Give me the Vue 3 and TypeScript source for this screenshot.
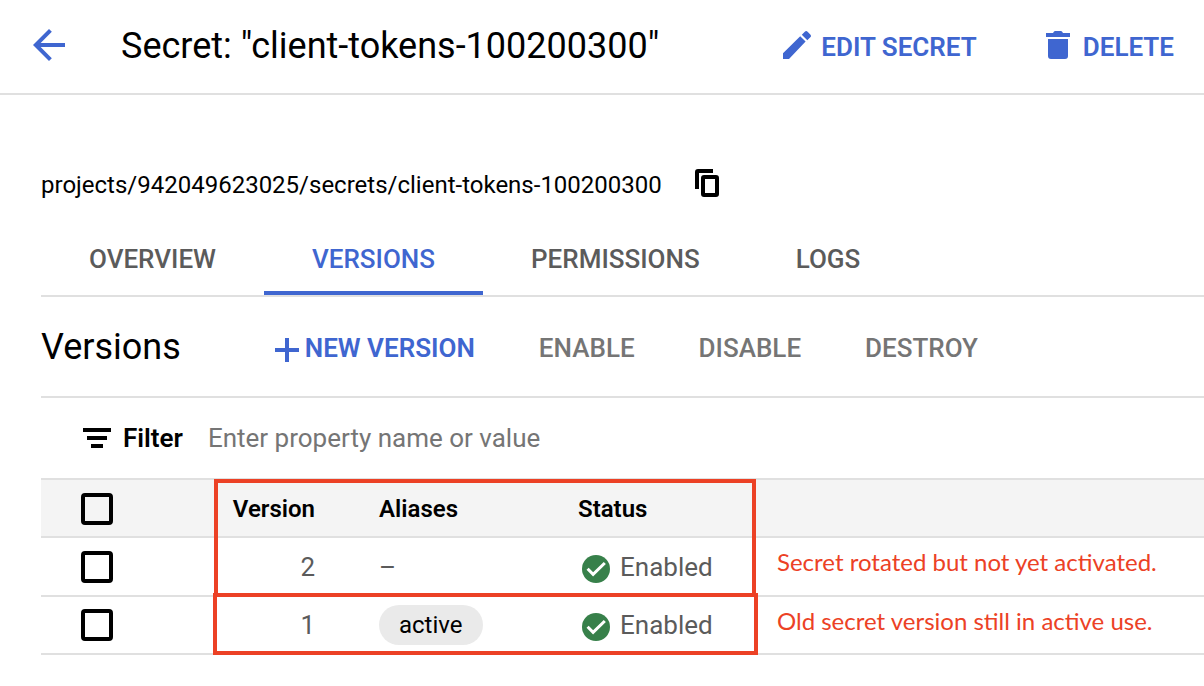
<script setup lang="ts">
import { ref, computed } from 'vue'

interface SecretVersion {
  id: number
  alias: string | null
  status: string
}

const tabs: string[] = ['Overview', 'Versions', 'Permissions', 'Logs']
const activeTab = ref('Versions')
const filterText = ref('')
const selected = ref<number[]>([])
const bulkActions: string[] = ['Enable', 'Disable', 'Destroy']

const versions: SecretVersion[] = [
  { id: 2, alias: null, status: 'Enabled' },
  { id: 1, alias: 'active', status: 'Enabled' },
]

const allSelected = computed<boolean>({
  get: () => selected.value.length === versions.length,
  set: (on) => {
    selected.value = on ? versions.map((v) => v.id) : []
  },
})
</script>

<template>
  <div class="page">
    <header class="topbar">
      <a class="back" href="#" aria-label="Back">
        <svg viewBox="4 4 16 16" width="32" height="32" aria-hidden="true">
          <path d="M20 11H7.83l5.59-5.59L12 4l-8 8 8 8 1.41-1.41L7.83 13H20v-2z" fill="currentColor" />
        </svg>
      </a>
      <h1>Secret: "client-tokens-100200300"</h1>
      <div class="top-actions">
        <button type="button" class="action">
          <svg viewBox="0 0 28 28" width="28" height="28" aria-hidden="true">
            <path d="M0 22.2 17.2 5.2l5.4 5.4L6 28H0zM18.8 3.8l3-3q1.4-1.4 2.8 0l2.7 2.7q1.4 1.4 0 2.8l-3 3z" fill="currentColor" />
          </svg>
          EDIT SECRET
        </button>
        <button type="button" class="action trash">
          <svg viewBox="0 0 24 28" width="24" height="28" aria-hidden="true">
            <path d="M0 2h7q1-2 2-2h6q1 0 2 2h7v4H0zM2 8h20v17q0 3-3 3H5q-3 0-3-3z" fill="currentColor" />
          </svg>
          DELETE
        </button>
      </div>
    </header>

    <main>
      <div class="resource">
        <span>projects/942049623025/secrets/client-tokens-100200300</span>
        <button type="button" aria-label="Copy resource name">
          <svg viewBox="0 0 24 28" width="24" height="28" aria-hidden="true">
            <path d="M2 20V3q0-1 1-1h15" fill="none" stroke="currentColor" stroke-width="4" />
            <rect x="8" y="8" width="14" height="18" rx="1" fill="none" stroke="currentColor" stroke-width="4" />
          </svg>
        </button>
      </div>

      <nav class="tabs" role="tablist">
        <button
          v-for="tab in tabs"
          :key="tab"
          type="button"
          role="tab"
          :aria-selected="tab === activeTab"
          :class="{ active: tab === activeTab }"
          @click="activeTab = tab"
        >
          {{ tab.toUpperCase() }}
        </button>
      </nav>

      <div class="toolbar">
        <h2>Versions</h2>
        <div class="tools">
          <button type="button" class="action add">
            <svg viewBox="0 0 24 24" width="24" height="24" aria-hidden="true">
              <path d="M12 0v24M0 12h24" stroke="currentColor" stroke-width="4" />
            </svg>
            NEW VERSION
          </button>
          <button v-for="name in bulkActions" :key="name" type="button" class="bulk" disabled>
            {{ name.toUpperCase() }}
          </button>
        </div>
      </div>

      <div class="filter">
        <svg viewBox="0 0 28 20" width="28" height="20" aria-hidden="true">
          <path d="M0 2h28M4 10h20M8 18h12" stroke="currentColor" stroke-width="4" />
        </svg>
        <label for="version-filter">Filter</label>
        <input id="version-filter" v-model="filterText" type="text" placeholder="Enter property name or value" />
      </div>

      <div class="table-area">
        <table>
          <colgroup>
            <col class="c-check" />
            <col class="c-version" />
            <col class="c-alias" />
            <col class="c-status" />
          </colgroup>
          <thead>
            <tr>
              <th class="check"><input v-model="allSelected" type="checkbox" aria-label="Select all versions" /></th>
              <th class="num">Version</th>
              <th class="alias">Aliases</th>
              <th>Status</th>
            </tr>
          </thead>
          <tbody>
            <tr v-for="v in versions" :key="v.id">
              <td class="check">
                <input v-model="selected" type="checkbox" :value="v.id" :aria-label="`Select version ${v.id}`" />
              </td>
              <td class="num">{{ v.id }}</td>
              <td class="alias">
                <span v-if="v.alias" class="chip">{{ v.alias }}</span>
                <template v-else>–</template>
              </td>
              <td>
                <div class="status">
                  <svg viewBox="0 0 28 28" width="28" height="28" aria-hidden="true">
                    <circle cx="14" cy="14" r="14" fill="#37804a" />
                    <path d="M5.6 13.8l5.5 5.6L22.8 8" fill="none" stroke="#fff" stroke-width="3" />
                  </svg>
                  {{ v.status }}
                </div>
              </td>
            </tr>
          </tbody>
        </table>

        <div class="mark mark-new"></div>
        <div class="mark mark-old"></div>
        <p class="note note-new">Secret rotated but not yet activated.</p>
        <p class="note note-old">Old secret version still in active use.</p>
      </div>
    </main>
  </div>
</template>

<style>
body {
  margin: 0;
  background: #fff;
}
</style>

<style scoped>
.page {
  font-family: Roboto, "Liberation Sans", sans-serif;
  font-size: 26px;
  line-height: 32px;
  color: #000;
  overflow-x: hidden;
}
.page * {
  box-sizing: border-box;
}
svg {
  display: block;
  flex: none;
}
button {
  padding: 0;
  border: 0;
  background: none;
  font: inherit;
  font-weight: 500;
  color: inherit;
  white-space: nowrap;
  cursor: pointer;
}
h1,
h2 {
  margin: 0;
  font-size: 36px;
  line-height: 44px;
  font-weight: 400;
  white-space: nowrap;
}
.topbar {
  display: flex;
  align-items: center;
  padding: 24px 30px 25px 33px;
  border-bottom: 2px solid #e0e0e0;
}
.back {
  color: #3f66d0;
  margin: 0 56px 2px 0;
}
.top-actions {
  display: flex;
  gap: 69px;
  margin-left: auto;
}
.action {
  display: flex;
  align-items: center;
  gap: 10px;
  font-weight: 600;
  color: #3f66d0;
}
.top-actions .action {
  padding-top: 2px;
}
.top-actions svg {
  margin-bottom: 4px;
}
.action.trash {
  gap: 13px;
}
main {
  padding: 72px 0 0 41px;
}
.resource {
  display: flex;
  align-items: center;
  gap: 33px;
  font-size: 24px;
}
.resource span {
  padding-top: 4px;
  line-height: 28px;
}
.tabs {
  display: flex;
  margin-top: 24px;
  border-bottom: 2px solid #e0e0e0;
}
.tabs button {
  padding: 20px 48px 16px;
  border-bottom: 4px solid transparent;
  color: #5b5b5b;
}
.tabs button.active {
  color: #3f66d0;
  border-bottom-color: #3f66d0;
}
.toolbar {
  display: flex;
  align-items: center;
  gap: 94px;
  padding: 28px 0 27px;
  border-bottom: 2px solid #e0e0e0;
}
.tools {
  display: flex;
  gap: 64px;
  padding-top: 2px;
}
.action.add {
  gap: 6px;
}
.action.add svg {
  margin-top: 4px;
}
.bulk {
  color: #757575;
}
.filter {
  display: flex;
  align-items: center;
  padding: 24px 0 24px 42px;
}
.filter label {
  margin: 0 25px 0 12px;
  font-weight: 600;
}
.filter input {
  flex: 1;
  min-width: 0;
  padding: 0;
  border: 0;
  outline: 0;
  font: inherit;
  background: none;
}
.filter input::placeholder {
  color: #757575;
  opacity: 1;
}
.table-area {
  position: relative;
}
table {
  width: 100%;
  table-layout: fixed;
  border-collapse: separate;
  border-spacing: 0;
  border-bottom: 2px solid #e0e0e0;
}
.c-check {
  width: 173px;
}
.c-version {
  width: 101px;
}
.c-alias {
  width: 263px;
}
th,
td {
  height: 58px;
  padding: 0;
  border-top: 2px solid #e0e0e0;
  text-align: left;
  color: #5b5b5b;
}
tbody tr:first-child td {
  height: 59px;
}
th {
  padding-top: 2px;
  background: #f4f4f4;
  font-size: 24px;
  font-weight: 600;
  color: #000;
}
.check {
  padding-left: 40px;
}
.num {
  text-align: right;
}
.alias {
  padding-left: 64px;
}
input[type="checkbox"] {
  display: block;
  appearance: none;
  width: 32px;
  height: 32px;
  margin: 0;
  border: 4px solid #000;
  border-radius: 4px;
}
input[type="checkbox"]:checked {
  background: #3f66d0;
}
.chip {
  display: inline-block;
  padding: 4px 20px;
  border-radius: 20px;
  background: #eaeaea;
  font-size: 24px;
  color: #000;
}
.status {
  display: flex;
  align-items: center;
  gap: 10px;
  padding-left: 4px;
}
.status svg {
  margin-top: 4px;
}
.mark {
  position: absolute;
  border: 4px solid #ec4125;
}
.mark-new {
  left: 173px;
  top: 1px;
  width: 542px;
  height: 118px;
}
.mark-old {
  left: 172px;
  top: 115px;
  width: 545px;
  height: 62px;
}
.note {
  position: absolute;
  left: 736px;
  margin: 0;
  font-family: Lato, "Noto Sans", sans-serif;
  font-size: 24px;
  color: #ec4125;
  white-space: nowrap;
}
.note-new {
  top: 68px;
}
.note-old {
  top: 127px;
}
</style>
